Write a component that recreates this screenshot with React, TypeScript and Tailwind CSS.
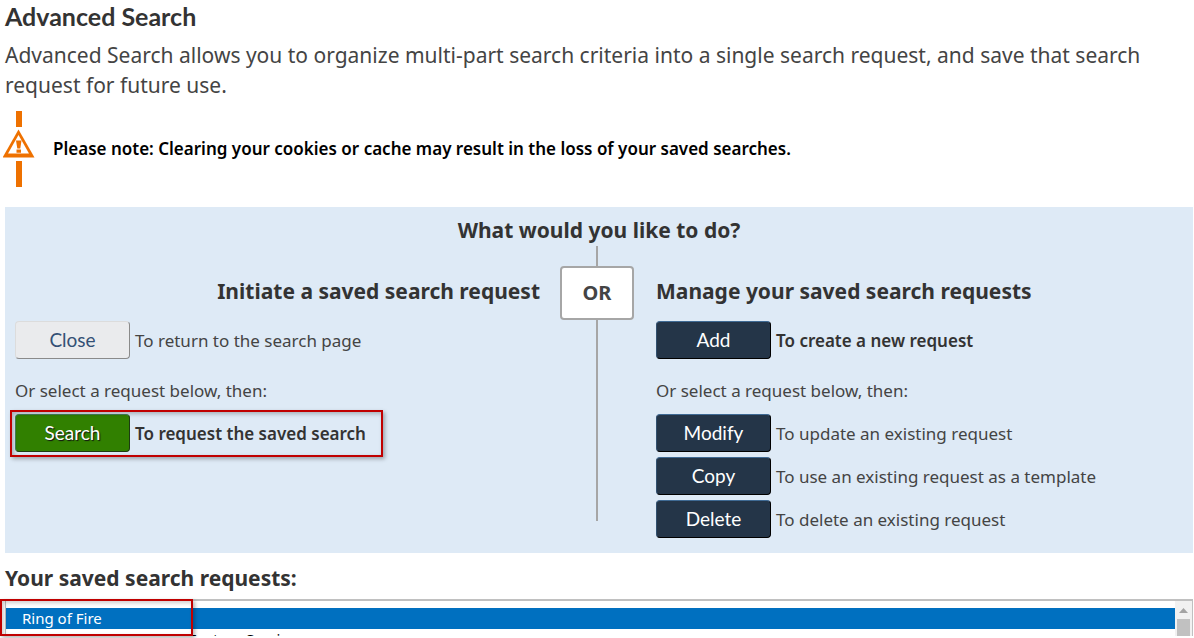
import React from 'react';

interface ActionRowProps {
  label: string;
  text: string;
  variant?: 'dark' | 'light' | 'green';
  bold?: boolean;
}

const variants = {
  dark: 'bg-[#243548] text-white border-t-[#3f6a94] border-l-[#31506f] border-r-black border-b-black',
  light: 'bg-[#eaebed] text-[#335075] border-t-[#dcdcdc] border-l-[#dcdcdc] border-r-[#8a8a8a] border-b-[#8a8a8a]',
  green: 'bg-[#318000] text-white border-t-[#458259] border-l-[#458259] border-r-[#1d3b12] border-b-[#1d3b12] [text-shadow:1px_1px_1px_#111]',
};

const ActionRow: React.FC<ActionRowProps> = ({ label, text, variant = 'dark', bold = false }) => (
  <div className="flex items-center gap-[5px]">
    <button
      type="button"
      className={`h-[38px] w-[115px] shrink-0 rounded border pb-px font-[Lato,sans-serif] text-[19px] leading-6 ${variants[variant]}`}
    >
      {label}
    </button>
    <span className={`pt-0.5 text-[17px] leading-6 ${bold ? 'font-semibold text-[#333]' : ''}`}>{text}</span>
  </div>
);

const WarningIcon: React.FC = () => (
  <svg width="32" height="76" viewBox="0 0 32 76" className="shrink-0" aria-hidden="true">
    <path d="M13 0h6v16h-6zM13 50h6v26h-6z" fill="#ee7100" />
    <path d="M15.500 18.500 31.500 46.500H-.500z" fill="#ee7100" />
    <path d="M15.500 24 26 42.500H5z" fill="#fff" />
    <path d="M13 29.500h5.500l-1.200 8h-3zM13.500 38.500h4.500v3.200h-4.500z" fill="#ee7100" />
  </svg>
);

const App: React.FC = () => {
  return (
    <main className="h-screen overflow-hidden bg-white pl-[5px] font-['Noto_Sans',sans-serif] text-[#444]">
      <h1 className="pt-px font-[Lato,sans-serif] text-[25px] leading-[30px] font-bold text-[#333]">Advanced Search</h1>
      <p className="mt-[9px] pr-10 text-[21px] leading-[30px]">
        Advanced Search allows you to organize multi-part search criteria into a single search request, and save that search request for future use.
      </p>

      <div className="mt-[11px] -ml-0.5 flex items-center gap-[18px]">
        <WarningIcon />
        <p className="text-[17px] leading-6 font-semibold text-black">
          Please note: Clearing your cookies or cache may result in the loss of your saved searches.
        </p>
      </div>

      <section className="mt-5 mr-px bg-[#deeaf6] pb-[15px]">
        <h2 className="pt-2 text-center text-[21px] leading-[30px] font-bold text-[#333]">What would you like to do?</h2>
        <div className="grid grid-cols-[1fr_74px_1fr] pt-px pr-1">
          <div className="pl-2.5">
            <h3 className="mt-[30px] mr-5 text-right text-[21px] leading-[30px] font-bold text-[#333]">Initiate a saved search request</h3>
            <div className="mt-[15px]">
              <ActionRow label="Close" text="To return to the search page" variant="light" />
            </div>
            <p className="mt-5 text-[17px] leading-6">Or select a request below, then:</p>
            <div className="relative mt-[11px]">
              <ActionRow label="Search" text="To request the saved search" variant="green" bold />
              <div className="pointer-events-none absolute -top-1 -left-[5px] h-[47px] w-[373px] border-2 border-[#c00000] shadow-[2px_2px_4px_rgba(0,0,0,0.3),inset_2px_2px_4px_rgba(0,0,0,0.25)]" />
            </div>
          </div>

          <div className="mb-[17px] flex flex-col items-center">
            <div className="h-5 w-0.5 bg-[#a6a6a6]" />
            <div className="flex h-[54px] w-[74px] items-center justify-center rounded border-2 border-[#a6a6a6] bg-white text-xl font-bold">OR</div>
            <div className="w-0.5 grow bg-[#a6a6a6]" />
          </div>

          <div className="pl-[22px]">
            <h3 className="mt-[30px] text-[21px] leading-[30px] font-bold text-[#333]">Manage your saved search requests</h3>
            <div className="mt-[15px]">
              <ActionRow label="Add" text="To create a new request" bold />
            </div>
            <p className="mt-5 text-[17px] leading-6">Or select a request below, then:</p>
            <div className="mt-[11px] flex flex-col gap-[5px]">
              <ActionRow label="Modify" text="To update an existing request" />
              <ActionRow label="Copy" text="To use an existing request as a template" />
              <ActionRow label="Delete" text="To delete an existing request" />
            </div>
          </div>
        </div>
      </section>

      <h2 id="saved-requests" className="mt-[10px] text-[21px] leading-[30px] font-bold text-[#333]">Your saved search requests:</h2>
      <div className="relative mt-1.5 mr-px h-[37px]">
        <div className="flex h-full overflow-hidden border-t-2 border-r border-l border-[#c0c0c0] bg-white">
          <ul role="listbox" aria-labelledby="saved-requests" className="grow pt-[7px] text-[15px] leading-[21px]">
            <li role="option" aria-selected="true" className="bg-[#0070c0] pl-4 text-white">Ring of Fire</li>
            <li role="option" aria-selected="false" className="pl-4 text-black">Comparable 2020 2027 Feature Services</li>
          </ul>
          <div className="flex w-[17px] flex-col items-center bg-[#f1f1f1]">
            <svg width="9" height="5" viewBox="0 0 9 5" className="mt-[7px] mb-1.5 shrink-0" aria-hidden="true">
              <path d="M4.500 0 9 5H0z" fill="#a3a3a3" />
            </svg>
            <div className="w-[13px] grow bg-[#c1c1c1]" />
          </div>
        </div>
        <div className="pointer-events-none absolute top-0 -left-[5px] h-[37px] w-[193px] border-2 border-[#c00000] shadow-[2px_2px_4px_rgba(0,0,0,0.3),inset_2px_2px_4px_rgba(0,0,0,0.2)]" />
      </div>
    </main>
  );
};

export default App;
